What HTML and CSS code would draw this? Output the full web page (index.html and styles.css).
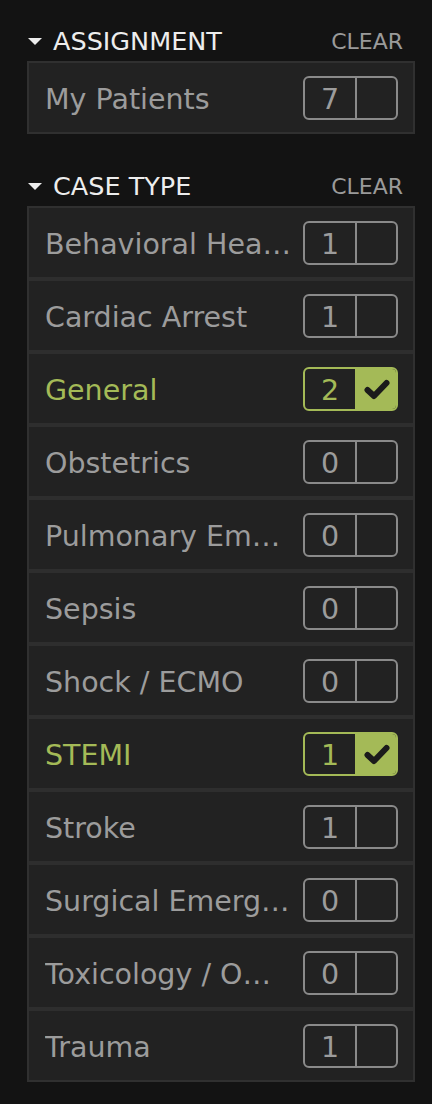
FILE: index.html
```html
<!DOCTYPE html>
<html lang="en">
<head>
<meta charset="utf-8">
<title>Filters</title>
<link rel="stylesheet" href="styles.css">
</head>
<body>
<div class="filters">
  <section class="group">
    <header class="group-head">
      <button class="toggle" type="button"><span class="caret"></span>ASSIGNMENT</button>
      <button class="clear" type="button">CLEAR</button>
    </header>
    <ul class="list">
      <li class="item"><span class="label">My Patients</span><span class="badge"><span class="count">7</span><span class="check"></span></span></li>
    </ul>
  </section>

  <section class="group">
    <header class="group-head">
      <button class="toggle" type="button"><span class="caret"></span>CASE TYPE</button>
      <button class="clear" type="button">CLEAR</button>
    </header>
    <ul class="list">
      <li class="item"><span class="label" title="Behavioral Health">Behavioral Hea…</span><span class="badge"><span class="count">1</span><span class="check"></span></span></li>
      <li class="item"><span class="label">Cardiac Arrest</span><span class="badge"><span class="count">1</span><span class="check"></span></span></li>
      <li class="item is-selected"><span class="label">General</span><span class="badge"><span class="count">2</span><span class="check"><svg class="tick" viewBox="0 0 26 22" width="26" height="22"><path d="M3.5 12 L10 18 L22.5 5"/></svg></span></span></li>
      <li class="item"><span class="label">Obstetrics</span><span class="badge"><span class="count">0</span><span class="check"></span></span></li>
      <li class="item"><span class="label" title="Pulmonary Embolism">Pulmonary Em…</span><span class="badge"><span class="count">0</span><span class="check"></span></span></li>
      <li class="item"><span class="label">Sepsis</span><span class="badge"><span class="count">0</span><span class="check"></span></span></li>
      <li class="item"><span class="label">Shock / ECMO</span><span class="badge"><span class="count">0</span><span class="check"></span></span></li>
      <li class="item is-selected"><span class="label">STEMI</span><span class="badge"><span class="count">1</span><span class="check"><svg class="tick" viewBox="0 0 26 22" width="26" height="22"><path d="M3.5 12 L10 18 L22.5 5"/></svg></span></span></li>
      <li class="item"><span class="label">Stroke</span><span class="badge"><span class="count">1</span><span class="check"></span></span></li>
      <li class="item"><span class="label" title="Surgical Emergency">Surgical Emerg…</span><span class="badge"><span class="count">0</span><span class="check"></span></span></li>
      <li class="item"><span class="label" title="Toxicology / Overdose">Toxicology / O…</span><span class="badge"><span class="count">0</span><span class="check"></span></span></li>
      <li class="item"><span class="label">Trauma</span><span class="badge"><span class="count">1</span><span class="check"></span></span></li>
    </ul>
  </section>
</div>
</body>
</html>
```

FILE: styles.css
```css
html, body {
  margin: 0;
  background: #131313;
}

body {
  font-family: "DejaVu Sans", "Liberation Sans", sans-serif;
}

.filters {
  width: 388px;
  padding: 26px 0 0 27px;
}

.group + .group {
  margin-top: 37px;
}

.group-head {
  display: flex;
  align-items: center;
  justify-content: space-between;
  height: 30px;
  margin-bottom: 5px;
  padding-right: 12px;
}

.toggle,
.clear {
  background: none;
  border: 0;
  padding: 0;
  margin: 0;
  font-family: inherit;
  cursor: pointer;
}

.toggle {
  display: flex;
  align-items: center;
  gap: 11px;
  height: 30px;
  line-height: 30px;
  font-size: 25.5px;
  color: #ededed;
  padding-left: 1px;
}

.caret {
  width: 0;
  height: 0;
  border-left: 7.5px solid transparent;
  border-right: 7.5px solid transparent;
  border-top: 7px solid #ededed;
}

.clear {
  font-size: 22px;
  line-height: 30px;
  color: #9a9a9a;
  margin-top: 2px;
}

.list {
  list-style: none;
  margin: 0;
  padding: 0;
  border: 2px solid #303030;
  background: #222222;
}

.item {
  display: flex;
  align-items: center;
  height: 69px;
  padding: 0 15px 0 16px;
}

.item + .item {
  border-top: 4px solid #2e2e2e;
}

.label {
  flex: 1;
  min-width: 0;
  margin-right: 4px;
  padding-top: 4px;
  font-size: 28.5px;
  color: #9c9c9c;
  white-space: nowrap;
  overflow: hidden;
  text-overflow: ellipsis;
}

.badge {
  flex: none;
  display: flex;
  width: 95px;
  height: 44px;
  box-sizing: border-box;
  border: 2px solid #8a8a8a;
  border-radius: 6px;
  overflow: hidden;
}

.count {
  width: 50px;
  display: flex;
  align-items: center;
  justify-content: center;
  padding-top: 4px;
  box-sizing: border-box;
  font-size: 28.5px;
  color: #9c9c9c;
}

.check {
  flex: 1;
  display: flex;
  align-items: center;
  justify-content: center;
  border-left: 2px solid #8a8a8a;
}

.tick path {
  fill: none;
  stroke: #1b1b1b;
  stroke-width: 6;
  stroke-linecap: round;
  stroke-linejoin: round;
}

.is-selected .label,
.is-selected .count {
  color: #a4ba57;
}

.is-selected .badge {
  border-color: #a4ba57;
}

.is-selected .check {
  background: #a4ba57;
  border-left-color: #a4ba57;
}
```
